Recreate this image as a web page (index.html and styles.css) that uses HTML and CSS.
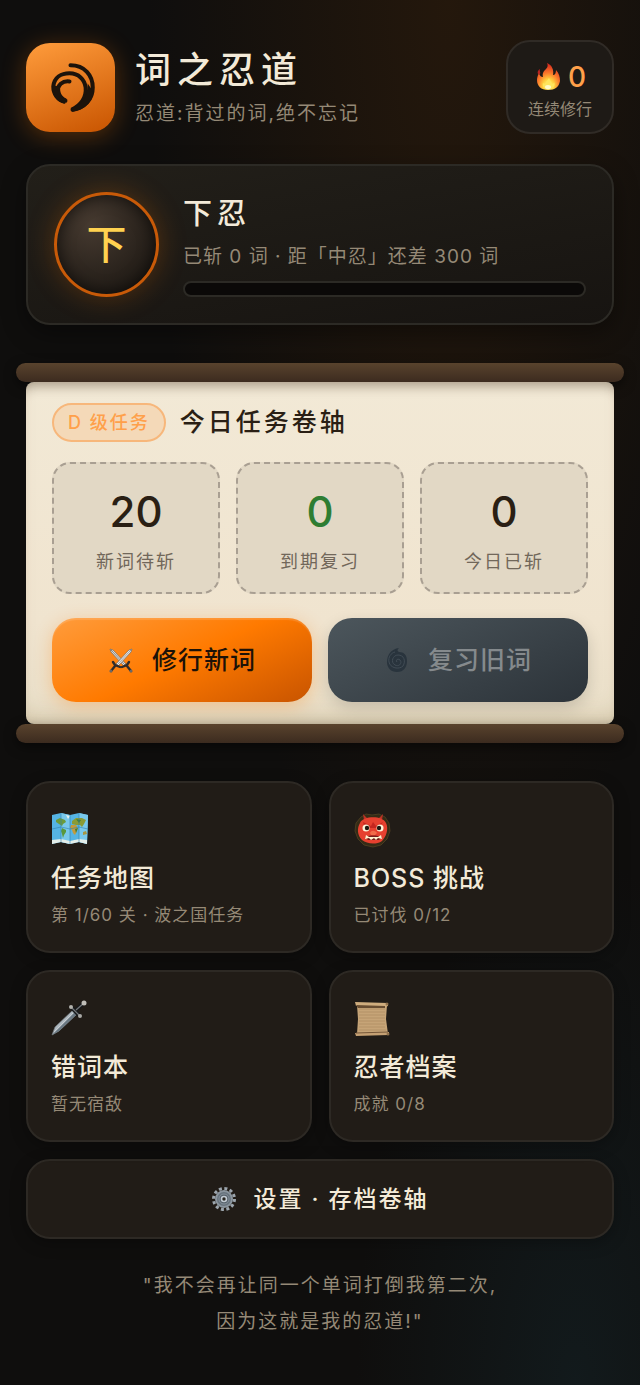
FILE: index.html
```html
<!DOCTYPE html>
<html lang="zh-CN">
<head>
	<meta charset="utf-8">
	<meta name="viewport" content="width=device-width, initial-scale=1">
	<title>词之忍道</title>
	<link rel="stylesheet" href="styles.css">
</head>
<body>
	<main class="app">
		<header class="header">
			<div class="logo">
				<svg viewBox="0 0 88 88" fill="none" stroke="#1c130b" aria-hidden="true">
					<path d="M44 22C58 22 66 32 66 44C66 56 58 64 46 66" stroke-width="4" stroke-linecap="round"/>
					<path d="M39 58C31 57 27 50 27 43C28 34 35 30 43 30C52 30 58 36 59 44C60 54 54 62 45 66" stroke-width="4"/>
					<path d="M43 38C36 37 31 42 31 48C32 53 35 56 39 57" stroke-width="4" stroke-linecap="round"/>
					<path d="M61 40C61 54 55 61 45 64L46 68C57 67 65 59 67 49Z" fill="#1c130b" stroke="none"/>
					<path d="M26 42C26 51 30 58 38 60L40 55C35 53 33 48 34 43Z" fill="#1c130b" stroke="none"/>
				</svg>
			</div>
			<div class="brand">
				<h1>词之忍道</h1>
				<p>忍道:背过的词,绝不忘记</p>
			</div>
			<div class="streak">
				<div class="streak-num">
					<svg viewBox="0 0 28 28" aria-hidden="true">
						<defs>
							<radialGradient id="fire" cx="0.5" cy="0.85" r="0.8">
								<stop offset="0" stop-color="#fff7a0"/>
								<stop offset="0.3" stop-color="#ffd23e"/>
								<stop offset="0.6" stop-color="#fb7a2a"/>
								<stop offset="1" stop-color="#d82a1e"/>
							</radialGradient>
						</defs>
						<path d="M14 27C7 27 3 23 3 17C3 14 4 12 5 10C6 13 7 14 9 14C8 10 10 8 12 6C14 4 14 2 13 0C18 2 20 7 19 12C21 12 22 10 22 7C25 10 26 14 26 18C25 24 21 27 14 27Z" fill="url(#fire)"/>
						<path d="M4 11C3 9 4 7 6 6C5 8 7 9 6 11Z" fill="#b92320"/>
						<path d="M14 26C10 26 8 23 9 20C10 21 11 21 12 20C12 18 14 17 15 15C16 17 17 19 18 21C19 21 20 20 20 19C22 23 19 26 14 26Z" fill="#ffe55c"/>
						<ellipse cx="14" cy="24" rx="3" ry="2" fill="#fffac8"/>
					</svg>
					<span>0</span>
				</div>
				<div class="streak-label">连续修行</div>
			</div>
		</header>

		<section class="rank">
			<div class="rank-badge">下</div>
			<div class="rank-info">
				<h2>下忍</h2>
				<p>已斩 0 词 · 距「中忍」还差 300 词</p>
				<div class="bar"><div class="bar-fill" style="width: 0%"></div></div>
			</div>
		</section>

		<section class="scroll">
			<div class="rod"></div>
			<div class="paper">
				<div class="mission">
					<span class="grade">D 级任务</span>
					<h2>今日任务卷轴</h2>
				</div>
				<div class="stats">
					<div class="stat">
						<strong>20</strong>
						<span>新词待斩</span>
					</div>
					<div class="stat due">
						<strong>0</strong>
						<span>到期复习</span>
					</div>
					<div class="stat">
						<strong>0</strong>
						<span>今日已斩</span>
					</div>
				</div>
				<div class="actions">
					<button type="button" class="btn learn">
						<svg viewBox="0 0 26 26" aria-hidden="true">
							<path d="M2 2L5 3L18 17L16 19L3 5Z" fill="#e8e8e8" stroke="#77716a" stroke-width="0.8"/>
							<path d="M3 3L17 18" stroke="#85817c"/>
							<path d="M24 2L21 3L8 17L10 19L23 5Z" fill="#f5f5f5" stroke="#77716a" stroke-width="0.8"/>
							<path d="M23 3L9 18" stroke="#999"/>
							<path d="M5 15L7 18L12 20M21 15L19 18L14 20M7 19L3 24M19 19L23 24" fill="none" stroke="#302c2b" stroke-width="2.4" stroke-linecap="round"/>
							<circle cx="3" cy="24" r="1.5" fill="#696969"/>
							<circle cx="23" cy="24" r="1.5" fill="#696969"/>
						</svg>
						<span>修行新词</span>
					</button>
					<button type="button" class="btn review" disabled>
						<svg viewBox="0 0 26 26" aria-hidden="true">
							<path d="M15 1C7 2 3 8 3 15C3 21 7 25 13 25C20 25 23 20 23 14C23 8 20 5 15 5C13 4 13 3 15 1Z" fill="#29343d"/>
							<path d="M13 15C11 13 14 11 16 13C19 17 14 20 11 18C6 15 9 8 14 8C20 8 22 14 19 19C15 23 6 21 5 15C4 10 7 6 11 5" fill="none" stroke="#414c55" stroke-width="1"/>
						</svg>
						<span>复习旧词</span>
					</button>
				</div>
			</div>
			<div class="rod"></div>
		</section>

		<nav class="menu">
			<button type="button" class="card">
				<svg viewBox="0 0 38 38" aria-hidden="true">
					<path d="M1 4L10 2L19 4L28 2L37 4L36 33L28 31L19 33L10 31L1 33Z" fill="#55b4e4"/>
					<path d="M10 2L19 4V33L10 31ZM28 2L37 4L36 33L28 31Z" fill="#79c8eb"/>
					<path d="M1 29L10 28L19 30L28 28L36 29V33L28 31L19 33L10 31L1 33Z" fill="#e4eee9"/>
					<path d="M5 9L9 7L14 9L15 11L12 13L11 15L8 13L5 11Z" fill="#6b9a3b"/>
					<path d="M11 17L15 19L15 21L13 24L12 27L11 23L10 20Z" fill="#5a983c"/>
					<path d="M21 10L25 7L31 7L35 9L33 13L31 16L29 14L25 14L21 13Z" fill="#8a9b35"/>
					<path d="M20 14L25 14L27 17L26 20L24 24L22 22L21 19L19 17Z" fill="#c39b3c"/>
					<path d="M24 18L27 17L25 22ZM25 8L30 9L28 12Z" fill="#467e31"/>
					<path d="M32 21L35 20L36 23L32 24Z" fill="#a89742"/>
					<path d="M15 4L19 5L17 8Z" fill="#e8f1ec"/>
					<path d="M10 2V31M19 4V33M28 2V31M1 18L10 16L19 18L28 16L37 18" fill="none" stroke="#2f81af" stroke-width="0.6"/>
				</svg>
				<span class="card-title">任务地图</span>
				<span class="card-sub">第 1/60 关 · 波之国任务</span>
			</button>
			<button type="button" class="card">
				<svg viewBox="0 0 38 38" aria-hidden="true">
					<path d="M7 6L12 3L18 4L25 3L31 6L35 12L36 20L33 28L27 34L19 36L10 34L4 28L1 20L2 12Z" fill="#352b16" stroke="#524323" stroke-width="0.8"/>
					<path d="M10 9L9 3L14 8M24 8L29 3L28 9" fill="#ba3225"/>
					<path d="M6 12C9 5 28 4 32 12C35 18 32 26 28 30C22 34 13 33 8 29C3 24 3 17 6 12Z" fill="#e6402f"/>
					<path d="M9 11L17 15L19 11L22 15L29 11L27 14L22 17H16L10 15Z" fill="#c4261f"/>
					<circle cx="12" cy="17" r="3.5" fill="#fff4d9"/>
					<circle cx="26" cy="17" r="3.5" fill="#fff4d9"/>
					<circle cx="13" cy="17" r="2.2" fill="#211912"/>
					<circle cx="25" cy="17" r="2.2" fill="#211912"/>
					<path d="M16 22C17 19 21 19 23 22L21 24H17Z" fill="#f26b4a"/>
					<path d="M11 26C15 24 23 24 28 26L25 29H14Z" fill="#751b19"/>
					<path d="M11 28L12 24L15 26H24L27 24L28 28L24 27L22 29L20 27L17 29L15 27Z" fill="#fff1cf"/>
				</svg>
				<span class="card-title">BOSS 挑战</span>
				<span class="card-sub">已讨伐 0/12</span>
			</button>
			<button type="button" class="card">
				<svg viewBox="0 0 38 38" aria-hidden="true">
					<path d="M1 35L4 27L22 10L26 14L8 31Z" fill="#aeb8bf" stroke="#737a7e" stroke-width="0.7"/>
					<path d="M1 35L24 12L26 14L8 31Z" fill="#697781"/>
					<path d="M3 32L22 13" stroke="#cbd1d4" stroke-width="0.8"/>
					<path d="M20 7L29 16M24 11L33 3" stroke="#17191b" stroke-width="4" stroke-linecap="round"/>
					<path d="M20 7L29 16M25 10L33 3" stroke="#737679" stroke-width="1.2"/>
					<circle cx="20" cy="7" r="2" fill="#b4b3ad"/>
					<circle cx="29" cy="16" r="2" fill="#aaa9a5"/>
					<circle cx="33" cy="3" r="2.5" fill="#c0beb8"/>
				</svg>
				<span class="card-title">错词本</span>
				<span class="card-sub">暂无宿敌</span>
			</button>
			<button type="button" class="card">
				<svg viewBox="0 0 38 38" aria-hidden="true">
					<path d="M3 5H33L32 19L34 34H3L4 19Z" fill="#c6a477"/>
					<path d="M5 9H31M5 12H31M5 15H31M5 18H31M5 21H31M5 24H31M5 27H31M5 30H32" stroke="#ae8d62" stroke-width="0.8"/>
					<path d="M1 2L34 3V6L31 7L2 6Z" fill="#cfad7e"/>
					<path d="M2 5L31 6V8L4 8Z" fill="#684d31"/>
					<path d="M1 33L35 32V35L2 36Z" fill="#c5a073"/>
					<path d="M2 33L34 32" stroke="#755638"/>
					<circle cx="33" cy="4" r="1.5" fill="#90714c"/>
					<circle cx="34" cy="34" r="1.5" fill="#90714c"/>
				</svg>
				<span class="card-title">忍者档案</span>
				<span class="card-sub">成就 0/8</span>
			</button>
		</nav>

		<button type="button" class="settings">
			<svg viewBox="0 0 26 26" aria-hidden="true">
				<circle cx="13" cy="13" r="10.5" fill="none" stroke="#9ca5ad" stroke-width="3" stroke-dasharray="3 2.5"/>
				<circle cx="13" cy="13" r="8" fill="#68747e" stroke="#8b959e" stroke-width="2"/>
				<circle cx="13" cy="13" r="5" fill="#56616b" stroke="#85919b"/>
				<circle cx="13" cy="13" r="2.5" fill="#28251f" stroke="#c2cbd3" stroke-width="1.6"/>
			</svg>
			<span>设置 · 存档卷轴</span>
		</button>

		<footer class="quote">
			"我不会再让同一个单词打倒我第二次,<br>
			因为这就是我的忍道!"
		</footer>
	</main>
</body>
</html>
```
FILE: styles.css
```css
*{
	margin: 0;
	box-sizing: border-box;
}

body{
	min-height: 100vh;
	background:
		radial-gradient(ellipse at 70% 0, rgba(120, 62, 8, 0.2), transparent 300px),
		radial-gradient(ellipse at 90% 100%, rgba(24, 48, 56, 0.35), transparent 220px),
		#0f0e0d;
	color: #f3ead8;
	font-family: Inter, "Noto Sans CJK SC", sans-serif;
}

button{
	font-family: inherit;
	color: inherit;
	cursor: pointer;
}

svg{
	display: block;
	flex: none;
}

.app{
	padding: 40px 26px;
}

.header{
	display: flex;
	align-items: center;
	gap: 20px;
}

.logo{
	width: 89px;
	height: 89px;
	flex: none;
	border-radius: 24px;
	background: linear-gradient(160deg, #ff9c3c, #c85400);
	box-shadow: 0 4px 24px rgba(255, 122, 0, 0.3);
}

.brand{
	flex: 1;
}

.brand h1{
	font-size: 36px;
	line-height: 48px;
	font-weight: 500;
	letter-spacing: 6px;
}

.brand p{
	margin-top: 6px;
	font-size: 19px;
	line-height: 28px;
	font-weight: 400;
	letter-spacing: 2px;
	color: #958976;
}

.streak{
	padding: 17px 20px 9px;
	border: 2px solid #302b26;
	border-radius: 24px;
	background: #1e1a16;
	text-align: center;
}

.streak-num{
	display: flex;
	justify-content: center;
	align-items: center;
	gap: 6px;
	font-size: 28px;
	line-height: 36px;
	font-weight: 500;
	color: #ffa04a;
}

.streak-num svg{
	width: 28px;
	height: 28px;
}

.streak-label{
	font-size: 16px;
	line-height: 28px;
	font-weight: 400;
	color: #958976;
}

.rank{
	display: flex;
	align-items: center;
	gap: 24px;
	margin-top: 30px;
	padding: 26px;
	border: 2px solid #2c2a25;
	border-radius: 24px;
	background: linear-gradient(170deg, #221f19, #171411);
	box-shadow: 0 8px 24px rgba(0, 0, 0, 0.4);
}

.rank-badge{
	display: flex;
	justify-content: center;
	align-items: center;
	width: 105px;
	height: 105px;
	flex: none;
	border: 3px solid #c85a08;
	border-radius: 50%;
	background: radial-gradient(circle at 35% 30%, #463a30, #1e1914 80%);
	box-shadow: 0 0 28px rgba(255, 122, 0, 0.25), inset 0 0 16px rgba(0, 0, 0, 0.6);
	font-size: 40px;
	line-height: 56px;
	font-weight: 500;
	color: #ffd250;
}

.rank-info{
	flex: 1;
}

.rank-info h2{
	font-size: 29px;
	line-height: 42px;
	font-weight: 500;
	letter-spacing: 5px;
}

.rank-info p{
	margin-top: 6px;
	font-size: 19px;
	line-height: 32px;
	font-weight: 400;
	letter-spacing: 1px;
	color: #958976;
}

.bar{
	height: 16px;
	margin-top: 8px;
	border: 2px solid #2c2a25;
	border-radius: 8px;
	background: #0b0908;
	overflow: hidden;
}

.bar-fill{
	height: 100%;
	background: #ff7a00;
}

.scroll{
	margin-top: 38px;
}

.rod{
	height: 19px;
	margin: 0 -10px;
	border-radius: 10px;
	background: linear-gradient(#59432d, #3c2b1f);
	box-shadow: 0 4px 12px rgba(0, 0, 0, 0.5);
}

.paper{
	padding: 20px 26px 22px;
	border-radius: 8px;
	background: linear-gradient(#f2e9d6, #f0e4cf 70%, #e9dfc8);
	box-shadow: inset 0 12px 12px -8px rgba(60, 40, 20, 0.4), inset 0 -20px 24px -16px rgba(120, 90, 40, 0.25);
}

.mission{
	display: flex;
	align-items: center;
	gap: 14px;
}

.grade{
	padding: 0 14px;
	border: 2px solid #f7b77b;
	border-radius: 20px;
	background: #f4d9b8;
	font-size: 18px;
	line-height: 35px;
	font-weight: 500;
	letter-spacing: 2px;
	color: #ffa04a;
}

.mission h2{
	font-size: 25px;
	line-height: 40px;
	font-weight: 500;
	letter-spacing: 3px;
	color: #2a1f14;
}

.stats{
	display: grid;
	grid-template-columns: repeat(3, 1fr);
	gap: 16px;
	margin-top: 20px;
}

.stat{
	padding: 20px 8px 16px;
	border: 2px dashed #a99f92;
	border-radius: 18px;
	background: #e2d8c5;
	text-align: center;
	color: #2a1f14;
}

.stat strong{
	display: block;
	font-size: 42px;
	line-height: 56px;
	font-weight: 500;
}

.stat span{
	display: block;
	margin-top: 8px;
	font-size: 18px;
	line-height: 28px;
	font-weight: 400;
	letter-spacing: 2px;
	color: #71675a;
}

.due strong{
	color: #2e7d32;
}

.actions{
	display: grid;
	grid-template-columns: 1fr 1fr;
	gap: 16px;
	margin-top: 24px;
}

.btn{
	display: flex;
	justify-content: center;
	align-items: center;
	gap: 18px;
	padding: 24px 12px;
	border: none;
	border-radius: 24px;
	font-size: 25px;
	line-height: 36px;
	font-weight: 500;
	letter-spacing: 1px;
}

.btn svg{
	width: 26px;
	height: 26px;
}

.learn{
	background: linear-gradient(155deg, #ff9c3c, #ff7a00 50%, #c85400);
	box-shadow: 0 4px 18px rgba(255, 122, 0, 0.3), inset 0 2px 1px rgba(255, 255, 255, 0.15);
	color: #1c1208;
}

.review{
	background: linear-gradient(155deg, #4c565c, #2c3339);
	box-shadow: 0 6px 16px rgba(0, 0, 0, 0.15);
	color: #858a8d;
	cursor: default;
}

.menu{
	display: grid;
	grid-template-columns: 1fr 1fr;
	gap: 17px;
	margin-top: 38px;
}

.card,
.settings{
	border: 2px solid #2d2924;
	border-radius: 24px;
	background: #211c17;
	box-shadow: 0 4px 16px rgba(0, 0, 0, 0.3);
}

.card{
	display: flex;
	flex-direction: column;
	align-items: flex-start;
	padding: 28px 23px 22px;
	text-align: left;
}

.card svg{
	width: 38px;
	height: 38px;
}

.card-title{
	margin-top: 10px;
	font-size: 25px;
	line-height: 38px;
	font-weight: 500;
	letter-spacing: 1px;
}

.card-sub{
	margin-top: 4px;
	font-size: 17px;
	line-height: 28px;
	font-weight: 400;
	letter-spacing: 1px;
	color: #958976;
}

.settings{
	display: flex;
	justify-content: center;
	align-items: center;
	gap: 16px;
	width: 100%;
	margin-top: 17px;
	padding: 18px;
	font-size: 23px;
	line-height: 40px;
	font-weight: 500;
	letter-spacing: 2px;
}

.settings svg{
	width: 26px;
	height: 26px;
}

.quote{
	margin-top: 29px;
	text-align: center;
	font-size: 19px;
	line-height: 36px;
	font-weight: 400;
	letter-spacing: 2px;
	color: #958976;
}
```
